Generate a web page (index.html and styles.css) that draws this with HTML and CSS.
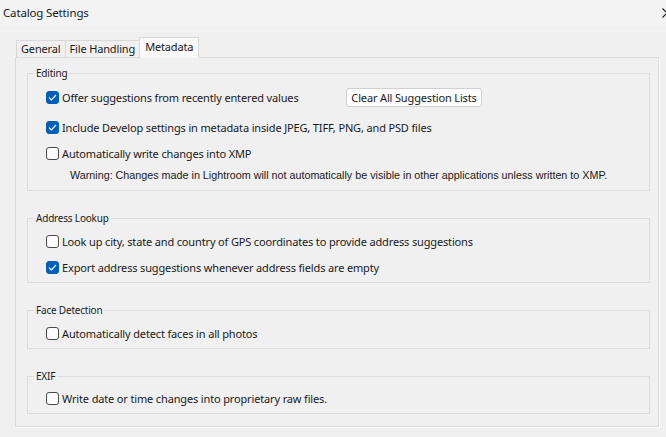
FILE: index.html
```html
<!DOCTYPE html>
<html>
<head>
<meta charset="utf-8">
<link rel="stylesheet" href="styles.css">
</head>
<body>
<div class="window">
  <div class="titlebar">
    <span class="title">Catalog Settings</span>
    <svg class="close" width="10" height="10" viewBox="0 0 10 10"><path d="M0.5 0.5 L9.5 9.5 M9.5 0.5 L0.5 9.5" stroke="#1a1a1a" stroke-width="1.1" fill="none"/></svg>
  </div>
  <div class="tabs">
    <div class="tab">General</div>
    <div class="tab">File Handling</div>
    <div class="tab active">Metadata</div>
  </div>
  <div class="panel">
    <div class="group editing">
      <div class="group-title">Editing</div>
      <div class="row row1">
        <label class="check-wrap"><span class="cb checked"><svg width="9" height="7" viewBox="0 0 9 7"><path d="M1 3.6 L3.4 6 L8 1" stroke="#fff" stroke-width="1.2" fill="none"/></svg></span><span class="lbl">Offer suggestions from recently entered values</span></label>
        <button class="btn">Clear All Suggestion Lists</button>
      </div>
      <div class="row row2">
        <span class="cb checked"><svg width="9" height="7" viewBox="0 0 9 7"><path d="M1 3.6 L3.4 6 L8 1" stroke="#fff" stroke-width="1.2" fill="none"/></svg></span><span class="lbl">Include Develop settings in metadata inside JPEG, TIFF, PNG, and PSD files</span>
      </div>
      <div class="row row3">
        <span class="cb"></span><span class="lbl">Automatically write changes into XMP</span>
      </div>
      <div class="warning">Warning: Changes made in Lightroom will not automatically be visible in other applications unless written to XMP.</div>
    </div>
    <div class="group">
      <div class="group-title">Address Lookup</div>
      <div class="row">
        <span class="cb"></span><span class="lbl">Look up city, state and country of GPS coordinates to provide address suggestions</span>
      </div>
      <div class="row">
        <span class="cb checked"><svg width="9" height="7" viewBox="0 0 9 7"><path d="M1 3.6 L3.4 6 L8 1" stroke="#fff" stroke-width="1.2" fill="none"/></svg></span><span class="lbl">Export address suggestions whenever address fields are empty</span>
      </div>
    </div>
    <div class="group">
      <div class="group-title">Face Detection</div>
      <div class="row">
        <span class="cb"></span><span class="lbl">Automatically detect faces in all photos</span>
      </div>
    </div>
    <div class="group exif">
      <div class="group-title">EXIF</div>
      <div class="row">
        <span class="cb"></span><span class="lbl">Write date or time changes into proprietary raw files.</span>
      </div>
    </div>
  </div>
</div>
</body>
</html>
```
FILE: styles.css
```css
html, body {
  margin: 0;
  padding: 0;
}
body {
  width: 666px;
  height: 437px;
  overflow: hidden;
  background: #f0f0f0;
  font-family: "Noto Sans", "Open Sans", sans-serif;
  font-size: 11px;
  letter-spacing: -0.15px;
  color: #1a1a1a;
}
.window {
  display: flex;
  flex-direction: column;
}
.titlebar {
  height: 26px;
  background: #f2f3f2;
  display: flex;
  align-items: center;
  padding-left: 3px;
  overflow: hidden;
}
.title {
  font-size: 11.5px;
  line-height: 16px;
}
.close {
  margin-left: auto;
  margin-right: -6px;
  flex: none;
}
.tabs {
  margin-top: 11px;
  padding-left: 16px;
  height: 20px;
  display: flex;
  align-items: flex-end;
  position: relative;
  z-index: 1;
}
.tab {
  height: 17px;
  box-sizing: border-box;
  border: 1px solid #d9d9d9;
  border-bottom: none;
  padding: 0 4px;
  line-height: 16px;
  margin-left: -1px;
}
.tab:first-child {
  margin-left: 0;
}
.tab.active {
  height: 21px;
  margin-bottom: -1px;
  background: #f9f9f9;
  line-height: 17px;
  padding: 0 5px;
}
.panel {
  margin-left: 15px;
  width: 644px;
  height: 370px;
  box-sizing: border-box;
  border: 1px solid #dadada;
  box-shadow: 1px 1px 0 #fdfdfd;
  padding: 15px 8px 0 11px;
  display: flex;
  flex-direction: column;
  gap: 27px;
}
.group {
  border: 1px solid #dcdcdc;
  padding: 0 0 5px 18px;
  display: flex;
  flex-direction: column;
}
.editing {
  padding-bottom: 8px;
}
.group-title {
  align-self: flex-start;
  margin: -8px 0 0 -12px;
  padding: 0 2px;
  background: #f0f0f0;
  font-size: 10px;
  letter-spacing: -0.2px;
  line-height: 14px;
}
.row {
  height: 20px;
  display: flex;
  align-items: center;
  margin-top: 6px;
}
.row1 {
  height: 21px;
  margin-top: 7px;
}
.row2 {
  margin-top: 9px;
}
.exif .row {
  margin-top: 5px;
}
.check-wrap {
  width: 300px;
  display: flex;
  align-items: center;
  flex: none;
}
.cb {
  width: 13px;
  height: 13px;
  box-sizing: border-box;
  border: 1px solid #4a4a4a;
  border-radius: 3px;
  background: #fbfbfb;
  flex: none;
  display: flex;
  align-items: center;
  justify-content: center;
}
.cb.checked {
  background: #005fb8;
  border-color: #005fb8;
}
.lbl {
  margin-left: 3px;
  white-space: nowrap;
}
.btn {
  width: 136px;
  height: 19px;
  box-sizing: border-box;
  border: 1px solid #d0d0d0;
  border-radius: 3px;
  background: #fdfdfd;
  font-family: inherit;
  font-size: 11px;
  letter-spacing: -0.15px;
  color: #1a1a1a;
  padding: 0;
  line-height: 16px;
  white-space: nowrap;
}
.warning {
  margin-top: 5px;
  padding-left: 24px;
  height: 14px;
  line-height: 14px;
  font-family: "Liberation Sans", Arial, sans-serif;
  font-size: 10.75px;
  letter-spacing: 0;
  white-space: nowrap;
}
```
